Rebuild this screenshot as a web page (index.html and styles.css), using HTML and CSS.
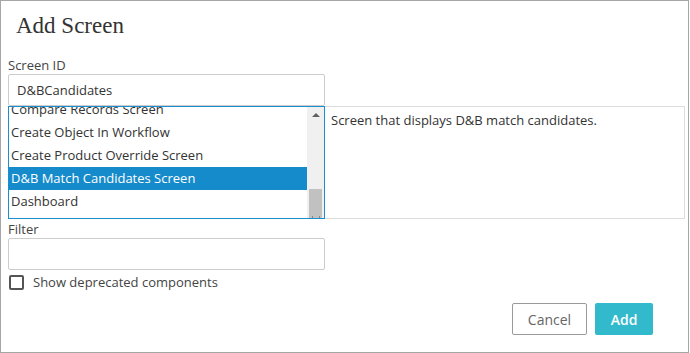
FILE: index.html
```html
<!DOCTYPE html>
<html lang="en">
<head>
  <meta charset="UTF-8">
  <title>Add Screen</title>
  <link rel="stylesheet" href="styles.css">
</head>
<body>
  <div class="dialog">
    <h1 class="dialog-title">Add Screen</h1>

    <label class="field-label">Screen ID</label>
    <div class="text-input">D&amp;BCandidates</div>

    <div class="picker">
      <div class="listbox">
        <ul class="list">
          <li>Compare Records Screen</li>
          <li>Create Object In Workflow</li>
          <li>Create Product Override Screen</li>
          <li class="selected">D&amp;B Match Candidates Screen</li>
          <li>Dashboard</li>
        </ul>
        <div class="scrollbar">
          <div class="arrow-up"></div>
          <div class="track"></div>
          <div class="thumb"></div>
          <div class="arrow-down"></div>
        </div>
      </div>
      <div class="description">Screen that displays D&amp;B match candidates.</div>
    </div>

    <label class="field-label filter-label">Filter</label>
    <div class="text-input"></div>

    <label class="checkbox-row">
      <span class="checkbox"></span>
      Show deprecated components
    </label>

    <div class="button-row">
      <button class="button cancel">Cancel</button>
      <button class="button primary">Add</button>
    </div>
  </div>
</body>
</html>
```

FILE: styles.css
```css
:root {
  --border-color: #a6a6a6;
  --input-border: #cccccc;
  --focus-color: #1a8fd0;
  --selected-color: #168bcb;
  --primary-color: #33b9cc;
  --text-color: #333333;
}

body {
  margin: 0;
  font-family: "Open Sans", "Noto Sans", sans-serif;
  font-size: 13px;
  color: var(--text-color);
  background: #ffffff;
}

.dialog {
  width: 689px;
  height: 353px;
  box-sizing: border-box;
  border: 1px solid var(--border-color);
  padding: 0 0 0 7px;
  display: flex;
  flex-direction: column;
}

.dialog-title {
  font-family: "Liberation Serif", "DejaVu Serif", serif;
  font-weight: normal;
  font-size: 23px;
  line-height: 26px;
  color: #333;
  margin: 12px 0 0 8px;
}

.field-label {
  display: block;
  line-height: 18px;
  color: #444;
  margin-top: 17px;
}

.filter-label {
  margin-top: 1px;
}

.text-input {
  width: 317px;
  height: 32px;
  box-sizing: border-box;
  border: 1px solid var(--input-border);
  border-radius: 2px;
  padding: 0 8px;
  line-height: 30px;
  color: #333;
}

/* list + description */
.picker {
  display: flex;
  height: 113px;
}

.listbox {
  width: 317px;
  box-sizing: border-box;
  border: 1px solid var(--focus-color);
  display: flex;
  overflow: hidden;
}

.list {
  flex: 1;
  list-style: none;
  margin: -9px 0 0 0;
  padding: 0;
}

.list li {
  height: 23px;
  line-height: 23px;
  padding-left: 2px;
  white-space: nowrap;
}

.list li.selected {
  background: var(--selected-color);
  color: #ffffff;
}

.scrollbar {
  width: 17px;
  background: #f0f0f0;
  display: flex;
  flex-direction: column;
  align-items: center;
}

.arrow-up {
  margin-top: 6px;
  width: 0;
  height: 0;
  border-left: 4px solid transparent;
  border-right: 4px solid transparent;
  border-bottom: 4px solid #606060;
}

.track {
  flex: 1;
}

.thumb {
  width: 13px;
  height: 29px;
  background: #c1c1c1;
}

.arrow-down {
  width: 6px;
  height: 2px;
  border-left: 1px dotted #888;
  border-right: 1px dotted #888;
  margin-top: -2px;
}

.description {
  width: 360px;
  box-sizing: border-box;
  border: 1px solid #dddddd;
  border-left: none;
  padding: 3px 6px;
  line-height: 20px;
}

/* checkbox */
.checkbox-row {
  display: flex;
  align-items: center;
  margin-top: 3px;
  color: #444;
  line-height: 18px;
}

.checkbox {
  width: 15px;
  height: 15px;
  box-sizing: border-box;
  border: 2px solid #555;
  border-radius: 2px;
  margin: 0 9px 0 1px;
}

.button-row {
  display: flex;
  justify-content: flex-end;
  gap: 8px;
  margin-top: 12px;
  padding-right: 35px;
}

.button {
  height: 32px;
  font-family: inherit;
  font-size: 14px;
  border-radius: 2px;
  cursor: pointer;
}

.button.cancel {
  width: 75px;
  background: #ffffff;
  border: 1px solid #9a9a9a;
  color: #666;
}

.button.primary {
  width: 58px;
  background: var(--primary-color);
  border: none;
  color: #ffffff;
  font-weight: 600;
}
```
